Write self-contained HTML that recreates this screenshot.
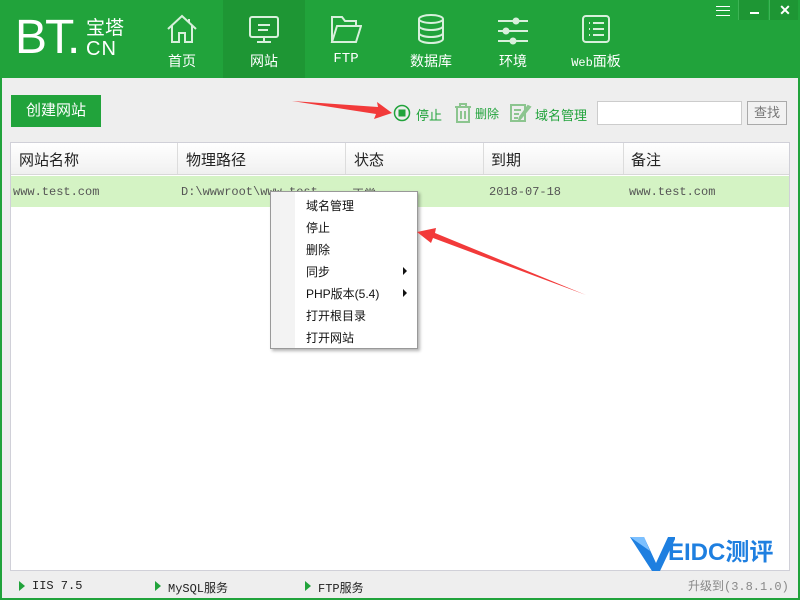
<!DOCTYPE html>
<html><head><meta charset="utf-8"><style>
*{margin:0;padding:0;box-sizing:border-box}
body{width:800px;height:600px;overflow:hidden;background:#eeeeee;font-family:"Liberation Sans","Noto Sans CJK SC",sans-serif;position:relative}
.top{position:absolute;left:0;top:0;width:800px;height:78px;background:#21a33b;color:#fff}
.abs{position:absolute}
.tab{position:absolute;top:0;height:78px;width:82px;text-align:center;font-size:14px}
.tab .lbl{position:absolute;top:51px;left:0;width:100%}
.tab svg{position:absolute;top:13px;left:50%;margin-left:-16px}
.mono{font-family:"Liberation Mono","Noto Sans CJK SC",monospace}
.tbl{position:absolute;left:10px;top:142px;width:780px;height:429px;background:#fff;border:1px solid #d0d0d8}
.hd{position:absolute;top:0;left:0;width:100%;height:32px;background:linear-gradient(#fff,#f0f0f0);border-bottom:1px solid #d8d8d8;font-size:15px;color:#222}
.hd span{position:absolute;top:6px}
.hd i{position:absolute;top:0;width:1px;height:31px;background:#dcdcdc}
.row{position:absolute;top:33px;left:0;width:100%;height:31px;background:#d4f3c4;font-size:12px;color:#555}
.row span{position:absolute;top:9px}
.menu{position:absolute;left:270px;top:191px;width:148px;height:158px;background:#fff;border:1px solid #999;box-shadow:2px 2px 3px rgba(0,0,0,.3)}
.menu .strip{position:absolute;left:0;top:0;width:24px;height:100%;background:#f3f3f3}
.menu div.it{position:absolute;left:35px;font-size:12px;color:#111}
.menu b{position:absolute;right:10px;width:0;height:0;border-left:4px solid #111;border-top:4px solid transparent;border-bottom:4px solid transparent}
.foot{position:absolute;top:579px;font-size:12px;color:#222}
.foot:before{content:"";position:absolute;left:-13px;top:2px;border-left:6px solid #21a33b;border-top:5px solid transparent;border-bottom:5px solid transparent}
.frame{position:absolute;left:0;top:0;width:800px;height:600px;border:2px solid #21a33b;border-top:none;pointer-events:none}
</style></head><body>
<div class="top">
 <div class="abs" style="left:15px;top:13px;font-size:48px;line-height:50px;letter-spacing:-2px">BT.</div>
 <div class="abs" style="left:86px;top:19px;font-size:19px;line-height:20px">宝塔</div>
 <div class="abs" style="left:86px;top:38px;font-size:20px;line-height:22px;letter-spacing:1px">CN</div>
 <div class="tab" style="left:141px"><svg width="32" height="32" viewBox="0 0 32 32" fill="none" stroke="#d8f0dc" stroke-width="2"><path d="M2 16 L16 3 L30 16 M6 13 V29 H13 V20 H19 V29 H26 V13 M23 6 V10"/></svg><div class="lbl">首页</div></div>
 <div class="tab" style="left:223px;background:#1e9634"><svg width="32" height="32" viewBox="0 0 32 32" fill="none" stroke="#d8f0dc" stroke-width="2"><rect x="2" y="4" width="28" height="20" rx="2"/><path d="M10 12H22M10 17H20M16 24V28M9 29H23"/></svg><div class="lbl">网站</div></div>
 <div class="tab" style="left:305px"><svg width="32" height="32" viewBox="0 0 32 32" fill="none" stroke="#d8f0dc" stroke-width="2"><path d="M2 29V4H12L15 8H26V12M2 29L7 13H31L26 29Z"/></svg><div class="lbl mono">FTP</div></div>
 <div class="tab" style="left:390px"><svg width="32" height="32" viewBox="0 0 32 32" fill="none" stroke="#d8f0dc" stroke-width="2"><ellipse cx="16" cy="6" rx="12" ry="4"/><path d="M4 6V26C4 28 9 30 16 30S28 28 28 26V6M4 13C4 15 9 17 16 17S28 15 28 13M4 20C4 22 9 24 16 24S28 22 28 20"/></svg><div class="lbl">数据库</div></div>
 <div class="tab" style="left:472px"><svg width="32" height="32" viewBox="0 0 32 32" fill="#d8f0dc" stroke="#d8f0dc" stroke-width="2"><path d="M1 8H31M1 18H31M1 28H31"/><circle cx="19" cy="8" r="2.5"/><circle cx="9" cy="18" r="2.5"/><circle cx="16" cy="28" r="2.5"/></svg><div class="lbl">环境</div></div>
 <div class="tab" style="left:555px"><svg width="32" height="32" viewBox="0 0 32 32" fill="none" stroke="#d8f0dc" stroke-width="2"><rect x="3" y="3" width="26" height="26" rx="3"/><path d="M9 10H10M9 16H10M9 22H10M13 10H24M13 16H24M13 22H24"/></svg><div class="lbl"><span class="mono" style="font-size:12px">Web</span>面板</div></div>
 <div class="abs" style="left:716px;top:6px;width:14px;height:10px;border-top:1px solid #fff;border-bottom:1px solid #fff"><div style="margin-top:3px;border-top:1px solid #fff"></div></div>
 <div class="abs" style="left:738px;top:0;width:30px;height:20px;background:#1e9634;border-left:1px solid #3db455"><div style="position:absolute;left:11px;top:12px;width:9px;height:2px;background:#fff"></div></div>
 <div class="abs" style="left:769px;top:0;width:31px;height:20px;background:#1e9634;color:#fff;font-weight:bold;font-size:14px;text-align:center;line-height:20px;border-left:1px solid #3db455">✕</div>
</div>
<div class="abs" style="left:11px;top:95px;width:90px;height:32px;background:#21a33b;color:#fff;font-size:15px;text-align:center;line-height:32px">创建网站</div>
<svg class="abs" style="left:393px;top:104px" width="18" height="18"><circle cx="9" cy="9" r="7.5" fill="none" stroke="#21a33b" stroke-width="1.5"/><rect x="5.5" y="5.5" width="7" height="7" fill="#21a33b"/></svg>
<div class="abs" style="left:416px;top:105px;font-size:13px;color:#21a33b">停止</div>
<svg class="abs" style="left:454px;top:103px" width="18" height="20" fill="none" stroke="#8cc58f" stroke-width="2"><path d="M1 4H17M6 4V1H12V4M3 4V19H15V4M7 8V16M11 8V16"/></svg>
<div class="abs" style="left:475px;top:105px;font-size:12px;color:#21a33b">删除</div>
<svg class="abs" style="left:510px;top:103px" width="22" height="20" fill="none" stroke="#8cc58f" stroke-width="2"><path d="M1 2H15V18H1ZM4 7H11M4 11H9M4 15H8M20 4L11 15L9 17L10 14L18 3Z"/></svg>
<div class="abs" style="left:535px;top:105px;font-size:13px;color:#21a33b">域名管理</div>
<div class="abs" style="left:597px;top:101px;width:145px;height:24px;background:#fff;border:1px solid #ccc"></div>
<div class="abs" style="left:747px;top:101px;width:40px;height:24px;background:#f2f2f2;border:1px solid #aaa;font-size:13px;color:#777;text-align:center;line-height:22px">查找</div>
<div class="tbl">
 <div class="hd"><span style="left:8px">网站名称</span><i style="left:166px"></i><span style="left:175px">物理路径</span><i style="left:334px"></i><span style="left:343px">状态</span><i style="left:472px"></i><span style="left:480px">到期</span><i style="left:612px"></i><span style="left:620px">备注</span></div>
 <div class="row mono"><span style="left:2px">www.test.com</span><span style="left:170px">D:\wwwroot\www.test</span><span style="left:341px;font-family:'Noto Sans CJK SC'">正常</span><span style="left:478px">2018-07-18</span><span style="left:618px">www.test.com</span></div>
</div>
<div class="menu"><div class="strip"></div>
 <div class="it" style="top:5px">域名管理</div><div class="it" style="top:27px">停止</div><div class="it" style="top:49px">删除</div>
 <div class="it" style="top:71px">同步</div><b style="top:75px"></b>
 <div class="it" style="top:93px">PHP版本(5.4)</div><b style="top:97px"></b>
 <div class="it" style="top:115px">打开根目录</div><div class="it" style="top:137px">打开网站</div>
</div>
<svg class="abs" style="left:0;top:0" width="800" height="600"><polygon points="292,101 378,107 377,102 392,113 374,119 376,114" fill="#f23a3a"/><polygon points="586,295 433,238 431,243 417,232 436,228 435,233" fill="#f23a3a"/></svg>
<svg class="abs" style="left:630px;top:533px" width="45" height="40"><path d="M0 4H14L26 30L38 4H46L30 38H22Z" fill="#1e7fe0"/><path d="M0 4H14L20 18Z" fill="#7cc0ff"/></svg>
<div class="abs" style="left:668px;top:538px;font-size:24px;font-weight:bold;color:#1e7fe0;line-height:30px">EIDC测评</div>
<div class="foot mono" style="left:32px">IIS 7.5</div>
<div class="foot mono" style="left:168px">MySQL服务</div>
<div class="foot mono" style="left:318px">FTP服务</div>
<div class="abs mono" style="left:688px;top:577px;font-size:12px;color:#888">升级到(3.8.1.0)</div>
<div class="frame"></div>
</body></html>
